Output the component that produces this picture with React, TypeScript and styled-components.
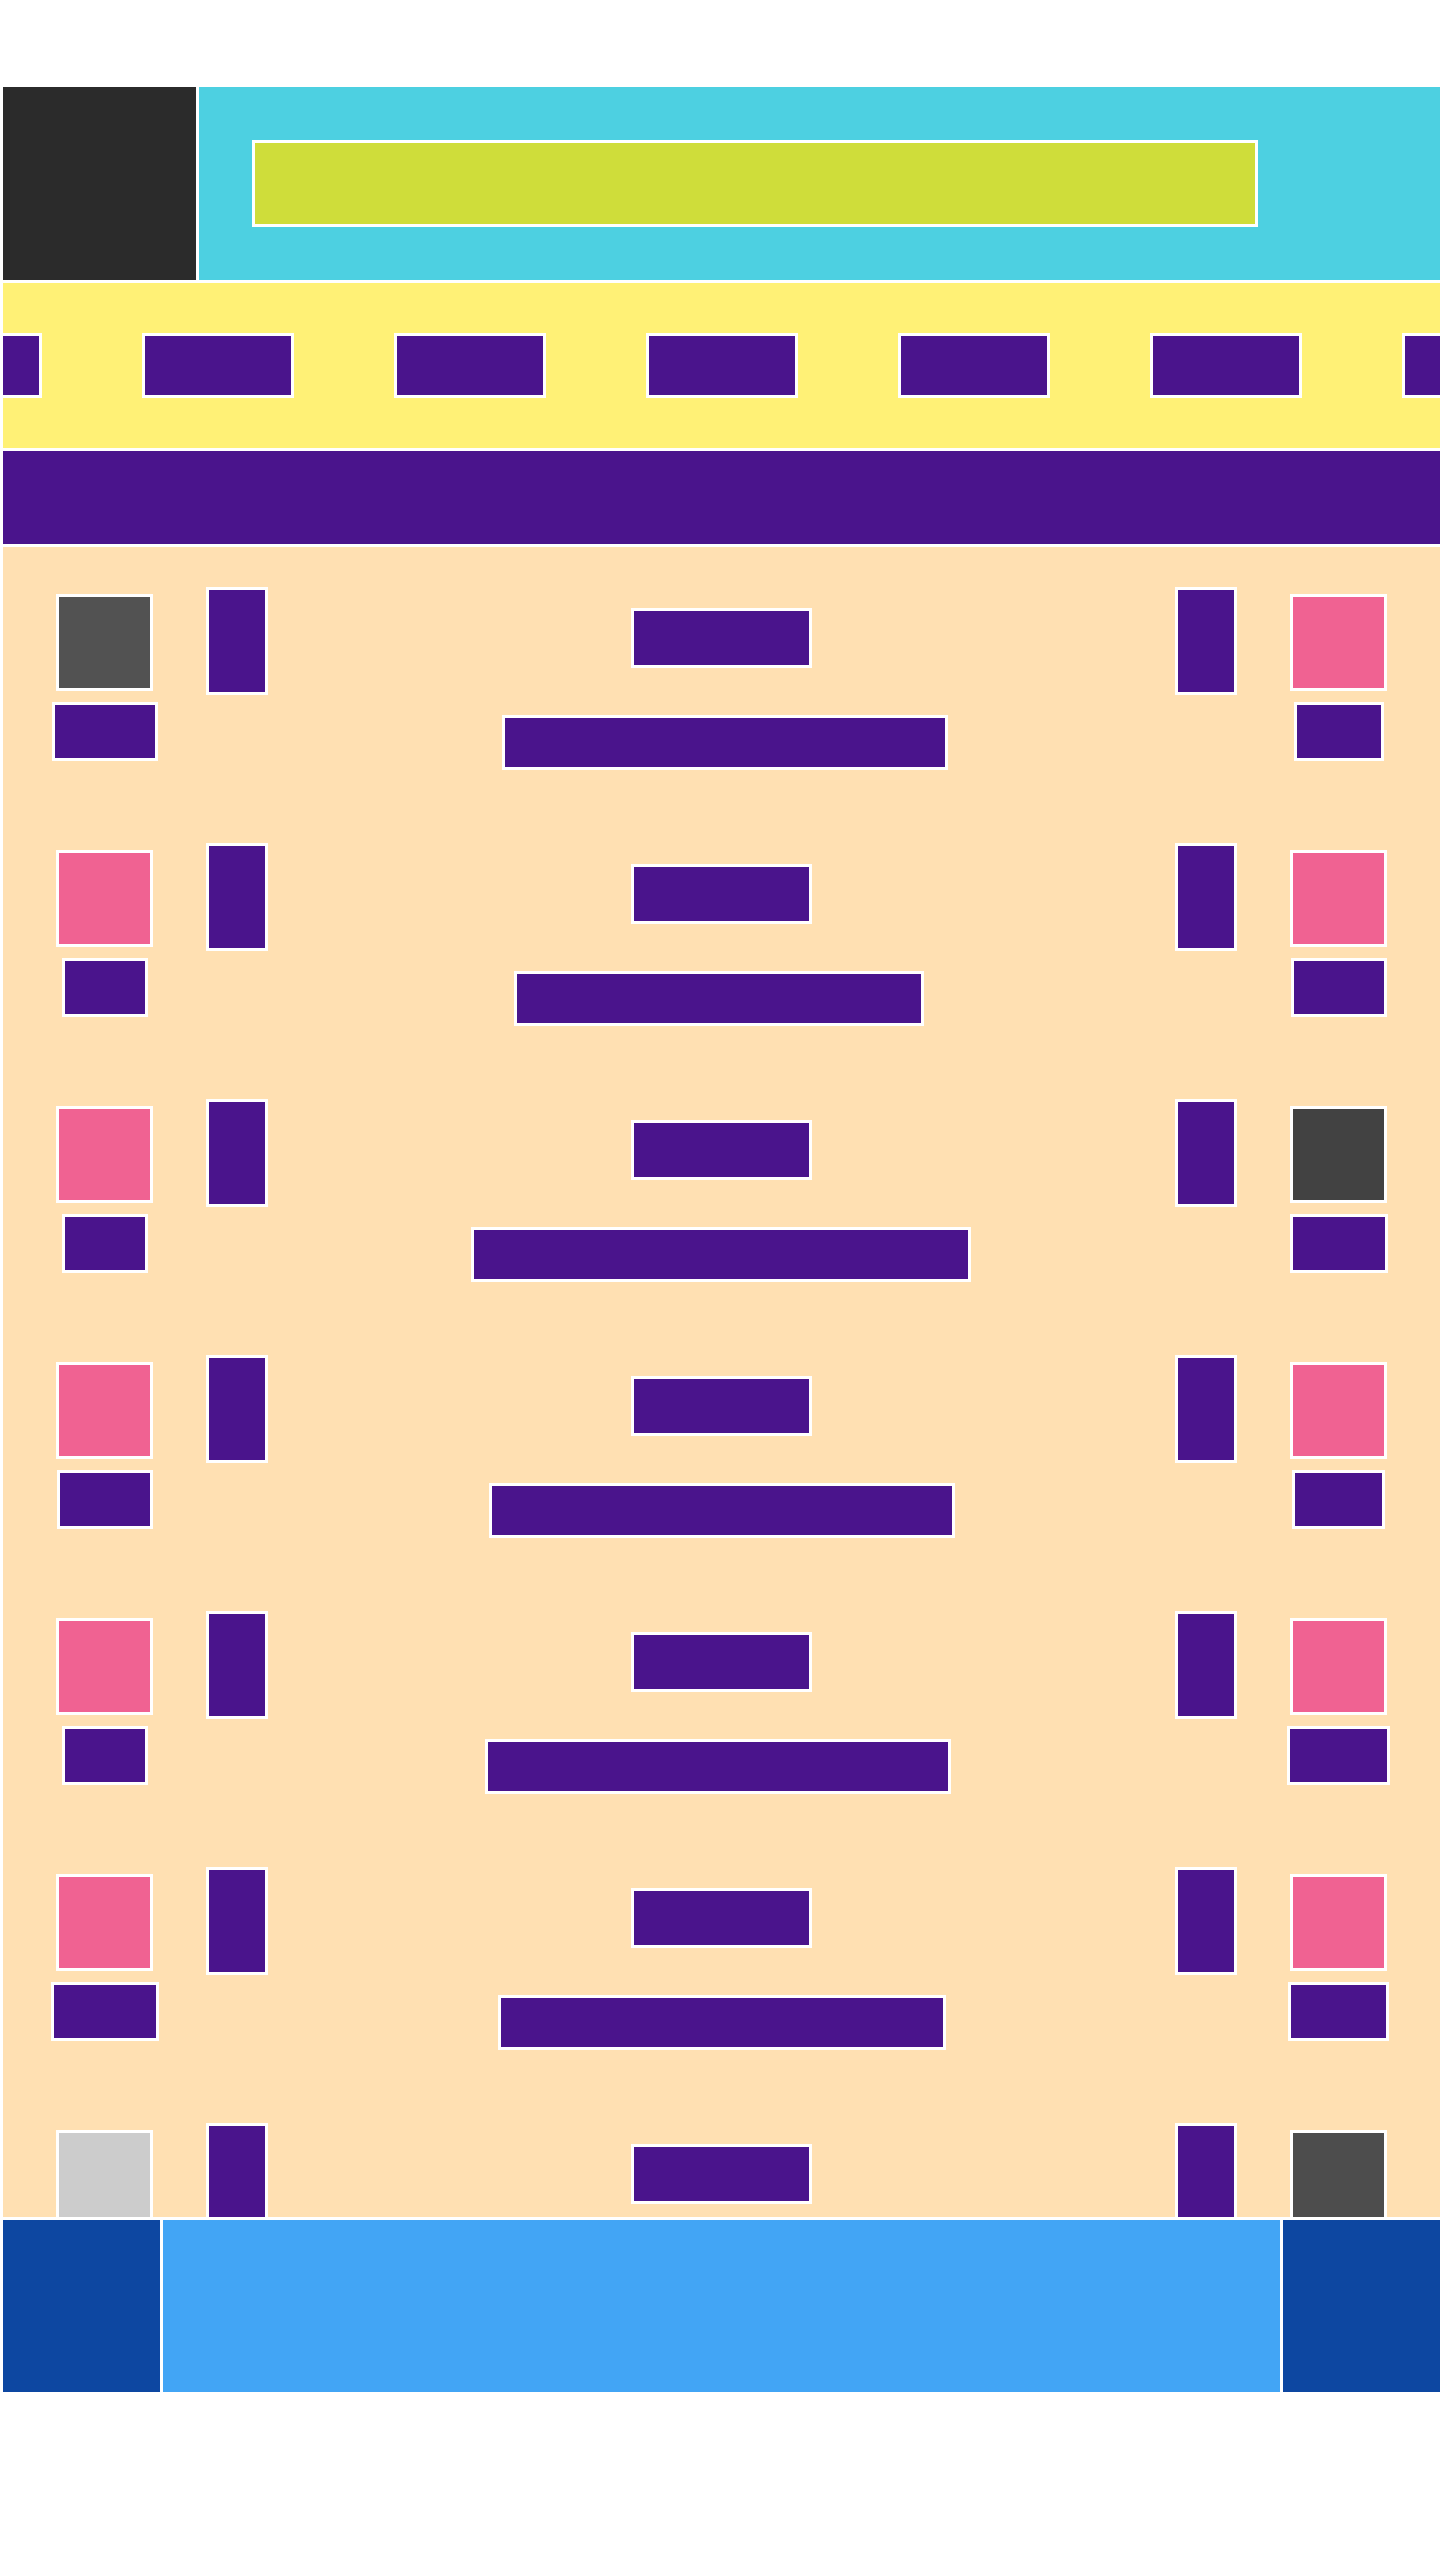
import styled, { createGlobalStyle } from "styled-components";

const GlobalStyle = createGlobalStyle`
    html, body {
        margin: 0;
        padding: 0;
        background: #ffffff;
        font-family: "Liberation Sans", Arial, sans-serif;
    }
    *, *::before, *::after {
        box-sizing: border-box;
    }
`;

const Page = styled.div`
    width: 1440px;
    padding: 87px 0 0 3px;
    display: flex;
    flex-direction: column;
    gap: 3px;
    overflow: hidden;
`;

const Header = styled.header`
    display: flex;
    gap: 3px;
    height: 193px;
`;

const Logo = styled.div`
    width: 193px;
    flex-shrink: 0;
    background: #2b2b2b;
`;

const SearchArea = styled.div`
    flex: 1;
    display: flex;
    align-items: center;
    padding-left: 53px;
    background: #4dd0e1;
`;

const SearchBox = styled.div`
    width: 1006px;
    height: 87px;
    border: 3px solid #ffffff;
    background: #cfdd3a;
`;

const Nav = styled.nav`
    height: 165px;
    display: flex;
    align-items: center;
    justify-content: center;
    gap: 100px;
    background: #fff176;
    overflow: hidden;
`;

const NavItem = styled.div`
    flex-shrink: 0;
    width: 152px;
    height: 65px;
    border: 3px solid #ffffff;
    background: #4a148c;
`;

const Banner = styled.div`
    height: 93px;
    background: #4a148c;
`;

const List = styled.main`
    height: 1670px;
    padding-top: 40px;
    background: #ffe0b2;
    overflow: hidden;
`;

const Row = styled.div`
    display: grid;
    grid-template-columns: 203px 62px 1fr 62px 203px;
    align-items: start;
    height: 256px;
`;

const Side = styled.div`
    display: flex;
    flex-direction: column;
    align-items: center;
    gap: 11px;
    margin-top: 7px;
`;

const Thumb = styled.div<{ $color: string }>`
    width: 97px;
    height: 97px;
    border: 3px solid #ffffff;
    background: ${(p) => p.$color};
`;

const Tag = styled.div<{ $width: number }>`
    width: ${(p) => p.$width + 6}px;
    height: 59px;
    border: 3px solid #ffffff;
    background: #4a148c;
`;

const Handle = styled.div`
    width: 62px;
    height: 108px;
    border: 3px solid #ffffff;
    background: #4a148c;
`;

const Middle = styled.div`
    display: flex;
    flex-direction: column;
    align-items: center;
    gap: 47px;
    margin-top: 21px;
`;

const Title = styled.div`
    width: 181px;
    height: 60px;
    border: 3px solid #ffffff;
    background: #4a148c;
`;

const Line = styled.div<{ $width: number; $shift: number }>`
    width: ${(p) => p.$width + 6}px;
    height: 55px;
    margin-left: ${(p) => p.$shift * 2}px;
    border: 3px solid #ffffff;
    background: #4a148c;
`;

const Footer = styled.footer`
    display: grid;
    grid-template-columns: 157px 1fr 157px;
    gap: 3px;
    height: 172px;
`;

const FooterSide = styled.div`
    background: #0d47a1;
`;

const FooterMain = styled.div`
    background: #42a5f5;
`;

const PINK = "#f06292";

const rows = [
    { left: "#525252", right: PINK, lTag: 100, rTag: 84, line: 440, shift: 3 },
    { left: PINK, right: PINK, lTag: 80, rTag: 90, line: 404, shift: -3 },
    { left: PINK, right: "#424242", lTag: 80, rTag: 92, line: 494, shift: -1 },
    { left: PINK, right: PINK, lTag: 90, rTag: 87, line: 460, shift: 0 },
    { left: PINK, right: PINK, lTag: 80, rTag: 97, line: 460, shift: -4 },
    { left: PINK, right: PINK, lTag: 102, rTag: 95, line: 442, shift: 0 },
    { left: "#cccccc", right: "#4d4d4d", lTag: 90, rTag: 90, line: 450, shift: 0 },
];

export default function App(): JSX.Element {
    return (
        <>
            <GlobalStyle />
            <Page>
                <Header>
                    <Logo />
                    <SearchArea>
                        <SearchBox />
                    </SearchArea>
                </Header>
                <Nav>
                    {Array.from({ length: 7 }).map((_, i) => (
                        <NavItem key={i} />
                    ))}
                </Nav>
                <Banner />
                <List>
                    {rows.map((row, i) => (
                        <Row key={i}>
                            <Side>
                                <Thumb $color={row.left} />
                                <Tag $width={row.lTag} />
                            </Side>
                            <Handle />
                            <Middle>
                                <Title />
                                <Line $width={row.line} $shift={row.shift} />
                            </Middle>
                            <Handle />
                            <Side>
                                <Thumb $color={row.right} />
                                <Tag $width={row.rTag} />
                            </Side>
                        </Row>
                    ))}
                </List>
                <Footer>
                    <FooterSide />
                    <FooterMain />
                    <FooterSide />
                </Footer>
            </Page>
        </>
    );
}
